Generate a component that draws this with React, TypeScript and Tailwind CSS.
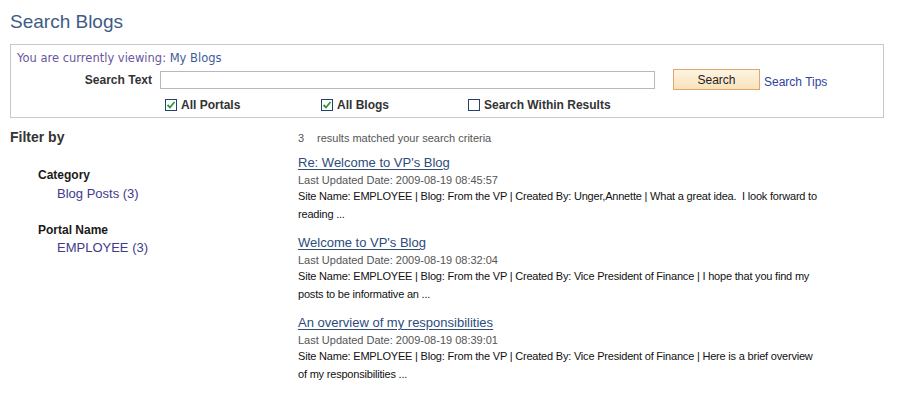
import React from 'react';

const results = [
  {
    title: "Re: Welcome to VP's Blog",
    date: '2009-08-19 08:45:57',
    lines: [
      'Site Name: EMPLOYEE | Blog: From the VP | Created By: Unger,Annette | What a great idea.\u00a0 I look forward to',
      'reading ...',
    ],
  },
  {
    title: "Welcome to VP's Blog",
    date: '2009-08-19 08:32:04',
    lines: [
      'Site Name: EMPLOYEE | Blog: From the VP | Created By: Vice President of Finance | I hope that you find my',
      'posts to be informative an ...',
    ],
  },
  {
    title: 'An overview of my responsibilities',
    date: '2009-08-19 08:39:01',
    lines: [
      'Site Name: EMPLOYEE | Blog: From the VP | Created By: Vice President of Finance | Here is a brief overview',
      'of my responsibilities ...',
    ],
  },
];

function CheckBox({ checked }: { checked: boolean }) {
  return (
    <span className="inline-flex w-[12px] h-[12px] border border-[#24426f] bg-white items-center justify-center shrink-0">
      {checked && (
        <svg width="10" height="10" viewBox="0 0 10 10">
          <path d="M1.5 5 L4 7.5 L8.5 2" stroke="#2b9a32" strokeWidth="1.8" fill="none" />
        </svg>
      )}
    </span>
  );
}

function Option({ label, checked, width }: { label: string; checked: boolean; width: string }) {
  return (
    <label className={`flex items-center gap-[4px] ${width}`}>
      <CheckBox checked={checked} />
      <span className="text-[12px] font-bold text-[#333]">{label}</span>
    </label>
  );
}

export default function App() {
  return (
    <div className="w-[897px] h-[403px] bg-white pl-[10px] pt-[10px] font-['Liberation_Sans',Arial,sans-serif] overflow-hidden">
      <h1 className="text-[19px] leading-[24px] text-[#3e5c86] pb-[10px]">Search Blogs</h1>

      {/* Search box */}
      <div className="w-[874px] border border-[#c9c9c9] pl-[6px] pt-[6px] pb-[4px]">
        <div className="text-[11.5px] leading-[14px] font-['DejaVu_Sans',Verdana,sans-serif]">
          <span className="text-[#6a559e]">You are currently viewing: </span>
          <span className="text-[#3f5b9c]">My Blogs</span>
        </div>
        <div className="flex items-center mt-[4px] h-[21px]">
          <span className="w-[135px] text-right text-[12px] font-bold text-[#333]">Search Text</span>
          <input className="ml-[8px] w-[495px] h-[18px] border border-[#b8b8b8] bg-white outline-none" />
          <button className="ml-[18px] w-[87px] h-[21px] border border-[#e0a66c] bg-gradient-to-b from-[#fdf4e3] to-[#f9e2b9] text-[12px] text-[#222]">
            Search
          </button>
          <a className="ml-[4px] mt-[5px] text-[12px] text-[#30429a] cursor-pointer">Search Tips</a>
        </div>
        <div className="flex items-center mt-[7px] h-[16px] pl-[148px]">
          <Option label="All Portals" checked width="w-[156px]" />
          <Option label="All Blogs" checked width="w-[147px]" />
          <Option label="Search Within Results" checked={false} width="" />
        </div>
      </div>

      <div className="flex mt-[11px]">
        {/* Filters */}
        <div className="w-[288px] shrink-0">
          <h2 className="text-[14px] leading-[17px] font-bold text-[#333]">Filter by</h2>
          <div className="pl-[28px] mt-[21px]">
            <div className="text-[12px] leading-[16px] font-bold text-[#1a1a1a]">Category</div>
            <div className="mt-[2px] pl-[19px] text-[13px] leading-[18px] text-[#3f3a8c]">Blog Posts (3)</div>
            <div className="mt-[19px] text-[12px] leading-[16px] font-bold text-[#1a1a1a]">Portal Name</div>
            <div className="mt-[1px] pl-[19px] text-[13px] leading-[18px] text-[#3f3a8c]">EMPLOYEE (3)</div>
          </div>
        </div>

        {/* Results */}
        <div className="w-[570px] pt-[2px]">
          <div className="text-[11px] leading-[14px] text-[#555]">
            <span className="inline-block w-[19px]">3</span>results matched your search criteria
          </div>
          <div className="mt-[9px] flex flex-col gap-[11px]">
            {results.map((r) => (
              <div key={r.title}>
                <a className="block text-[13px] leading-[18px] text-[#2d4b7b] underline underline-offset-2 cursor-pointer">
                  {r.title}
                </a>
                <div className="mt-px text-[11px] leading-[14px] text-[#555]">Last Updated Date: {r.date}</div>
                {r.lines.map((line) => (
                  <div key={line} className="text-[11px] leading-[18px] tracking-[-0.2px] text-[#111] whitespace-nowrap">
                    {line}
                  </div>
                ))}
              </div>
            ))}
          </div>
        </div>
      </div>
    </div>
  );
}
